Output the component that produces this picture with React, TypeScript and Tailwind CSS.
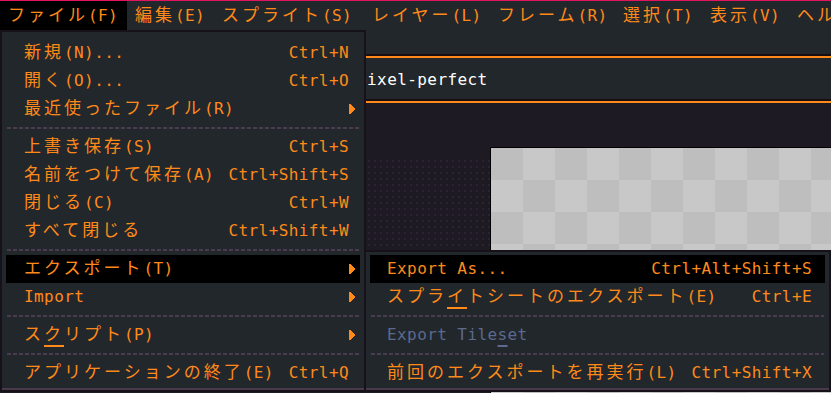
import clsx from 'clsx';

type Item =
    | { sep: true }
    | { sep?: false; label: string; keys?: string; sub?: boolean; hl?: boolean; off?: boolean; u?: number };

const menuBar = [
    { label: 'ファイル(F)', w: 'w-[127px]', open: true },
    { label: '編集(E)', w: 'w-[87px]' },
    { label: 'スプライト(S)', w: 'w-[150px]' },
    { label: 'レイヤー(L)', w: 'w-[126px]' },
    { label: 'フレーム(R)', w: 'w-[125px]' },
    { label: '選択(T)', w: 'w-[87px]' },
    { label: '表示(V)', w: 'w-[87px]' },
    { label: 'ヘルプ(H)', w: 'w-[120px]' },
];

const fileMenu: Item[] = [
    { label: '新規(N)...', keys: 'Ctrl+N' },
    { label: '開く(O)...', keys: 'Ctrl+O' },
    { label: '最近使ったファイル(R)', sub: true },
    { sep: true },
    { label: '上書き保存(S)', keys: 'Ctrl+S' },
    { label: '名前をつけて保存(A)', keys: 'Ctrl+Shift+S' },
    { label: '閉じる(C)', keys: 'Ctrl+W' },
    { label: 'すべて閉じる', keys: 'Ctrl+Shift+W' },
    { sep: true },
    { label: 'エクスポート(T)', sub: true, hl: true },
    { label: 'Import', sub: true },
    { sep: true },
    { label: 'スクリプト(P)', sub: true, u: 1 },
    { sep: true },
    { label: 'アプリケーションの終了(E)', keys: 'Ctrl+Q' },
];

const exportMenu: Item[] = [
    { label: 'Export As...', keys: 'Ctrl+Alt+Shift+S', hl: true },
    { label: 'スプライトシートのエクスポート(E)', keys: 'Ctrl+E', u: 3 },
    { sep: true },
    { label: 'Export Tileset', off: true, u: 11 },
    { sep: true },
    { label: '前回のエクスポートを再実行(L)', keys: 'Ctrl+Shift+X' },
];

// the pixel font is double width for kana/kanji, so size the two scripts apart
function Label({ text, u = -1 }: { text: string; u?: number }) {
    return (
        <span className="whitespace-pre leading-none">
            {Array.from(text).map((c, i) => (
                <span
                    key={i}
                    className={clsx(
                        c.charCodeAt(0) < 128 ? 'text-[16px] tracking-[0.4px]' : 'text-[17px] tracking-[3px]',
                        i === u && 'underline decoration-2 underline-offset-[5px]'
                    )}
                >
                    {c}
                </span>
            ))}
        </span>
    );
}

function Arrow() {
    return (
        <svg width="6" height="10" viewBox="0 0 6 10" className="shrink-0">
            <path d="M0 0H2V1H3V2H4V3H5V4H6V6H5V7H4V8H3V9H2V10H0Z" fill="#ff8a1a" />
        </svg>
    );
}

function Separator() {
    return (
        <div className="h-[10px] flex items-center px-[1px]">
            <div className="h-[2px] w-full bg-[repeating-linear-gradient(90deg,#4a3b4f_0_4px,transparent_4px_6px)]" />
        </div>
    );
}

function Menu({ items, hasArrows, className }: { items: Item[]; hasArrows?: boolean; className: string }) {
    return (
        <div className={clsx('absolute border-2 border-[#17121a] bg-[#22272b]', className)}>
            <div className="px-[4px] pt-[3px]">
                {items.map((it, i) =>
                    it.sep ? (
                        <Separator key={i} />
                    ) : (
                        <div
                            key={i}
                            className={clsx(
                                'h-[28px] flex items-center',
                                hasArrows ? 'pl-[18px] pr-[5px]' : 'pl-[17px] pr-[13px]',
                                it.hl && 'bg-black',
                                it.off ? 'text-[#5b6a8e]' : 'text-[#ff8a1a]'
                            )}
                        >
                            <div className="flex-1">
                                <Label text={it.label} u={it.u} />
                            </div>
                            {it.keys && <Label text={it.keys} />}
                            {hasArrows && (it.sub ? <Arrow /> : <div className="w-[6px]" />)}
                        </div>
                    )
                )}
            </div>
            <div className="mt-[1px] h-[2px] bg-[#463a4b]" />
        </div>
    );
}

export default function App() {
    return (
        <div className="relative w-[831px] h-[393px] overflow-hidden flex flex-col bg-[#1e1a23] font-['DejaVu_Sans_Mono','Noto_Sans_CJK_JP',monospace]">
            {/* Menu bar */}
            <div className="h-[30px] shrink-0 flex border-t border-[#e3135f] bg-[#22272b] text-[#ff8a1a]">
                {menuBar.map((m) => (
                    <div key={m.label} className={clsx('shrink-0 flex items-center px-2', m.w, m.open && 'bg-black')}>
                        <Label text={m.label} />
                    </div>
                ))}
            </div>

            {/* Toolbar strip and tab bar */}
            <div className="h-[24px] shrink-0 bg-[#22272b]" />
            <div className="shrink-0 border-t-2 border-[#180e12]">
                <div className="h-[43px] border-t-2 border-[#ff8a1a] bg-[#22272b] flex items-center pl-[357px] pt-[2px] text-white">
                    <Label text="pixel-perfect" />
                </div>
            </div>
            <div className="shrink-0 border-t-2 border-[#180e12]">
                <div className="border-t-2 border-[#ff8a1a]" />
            </div>

            {/* Editor */}
            <div className="flex-1 flex pt-[44px] min-h-0">
                <div className="w-[490px] shrink-0 pt-[11px]">
                    <div className="h-full bg-[radial-gradient(circle,#29242f_1px,transparent_1.2px)] bg-[length:6px_6px]" />
                </div>
                <div className="flex-1 border-t border-l border-black bg-[conic-gradient(#c8c8c8_25%,#bebebe_0_50%,#c8c8c8_0_75%,#bebebe_0)] bg-[length:64px_64px]" />
            </div>

            <Menu items={fileMenu} hasArrows className="left-0 top-[30px] w-[366px] pt-[4px]" />
            <Menu items={exportMenu} className="left-[364px] top-[250px] w-[467px]" />
        </div>
    );
}
